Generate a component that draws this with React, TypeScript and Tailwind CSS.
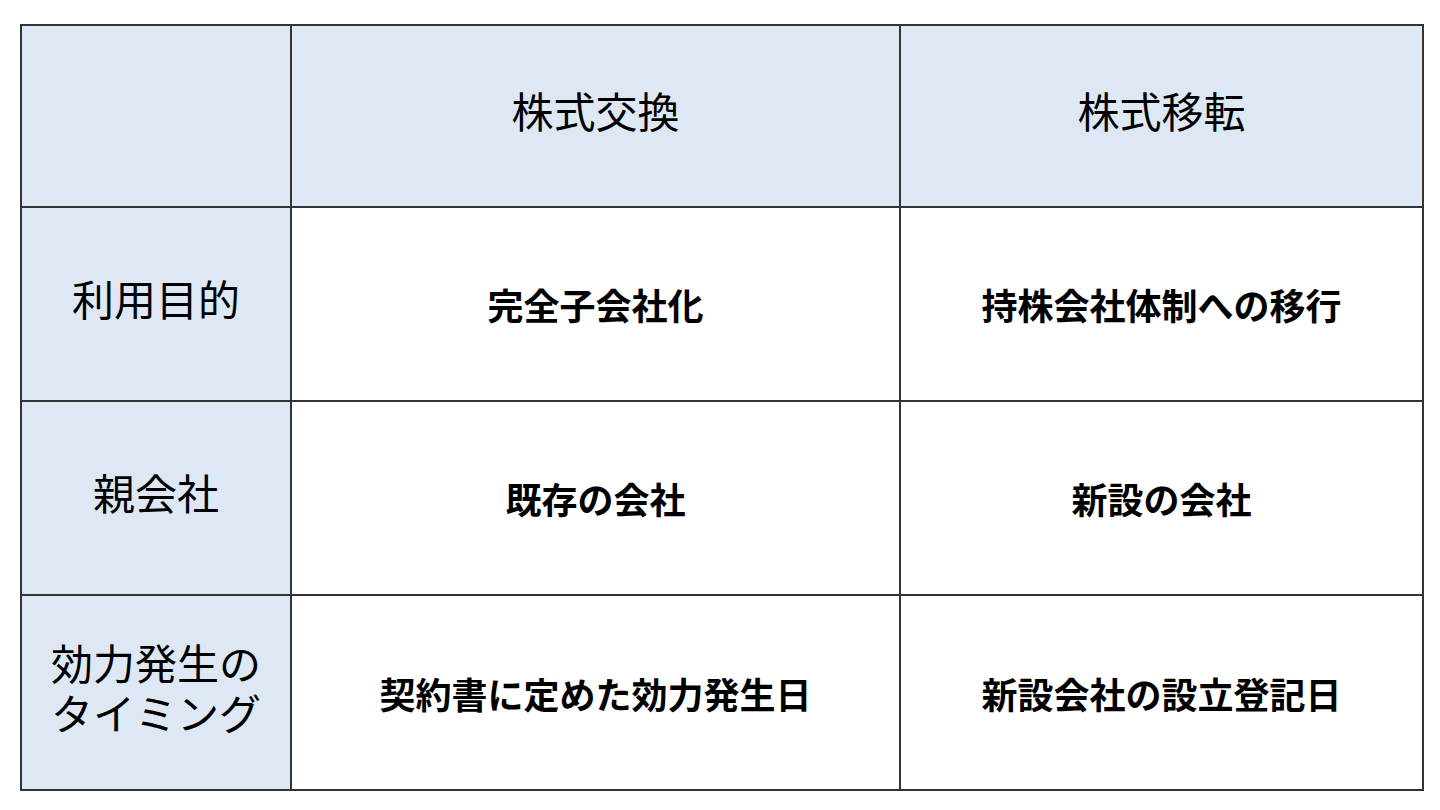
import React from "react";

const font = { fontFamily: '"Noto Sans CJK JP", "Noto Sans", sans-serif' };

export default function App() {
  const head = "bg-[#dde8f4] border-r-2 border-b-2 border-[#333333] flex items-center justify-center text-center text-[42px] leading-[50px] pb-[12px] text-black";
  const body = "bg-white border-r-2 border-b-2 border-[#333333] flex items-center justify-center text-center text-[36px] font-bold text-black";
  return (
    <div className="w-[1440px] h-[810px] bg-white pt-[24px] pl-[20px]" style={font}>
      <div className="grid grid-cols-[270px_609px_523px] grid-rows-[182px_194px_194px_195px] border-l-2 border-t-2 border-[#333333] w-[1404px]">
        <div className={head}></div>
        <div className={head}>株式交換</div>
        <div className={head}>株式移転</div>

        <div className={head}>利用目的</div>
        <div className={body}>完全子会社化</div>
        <div className={body}>持株会社体制への移行</div>

        <div className={head}>親会社</div>
        <div className={body}>既存の会社</div>
        <div className={body}>新設の会社</div>

        <div className={head}>
          <span>効力発生の<br />タイミング</span>
        </div>
        <div className={body}>契約書に定めた効力発生日</div>
        <div className={body}>新設会社の設立登記日</div>
      </div>
    </div>
  );
}
